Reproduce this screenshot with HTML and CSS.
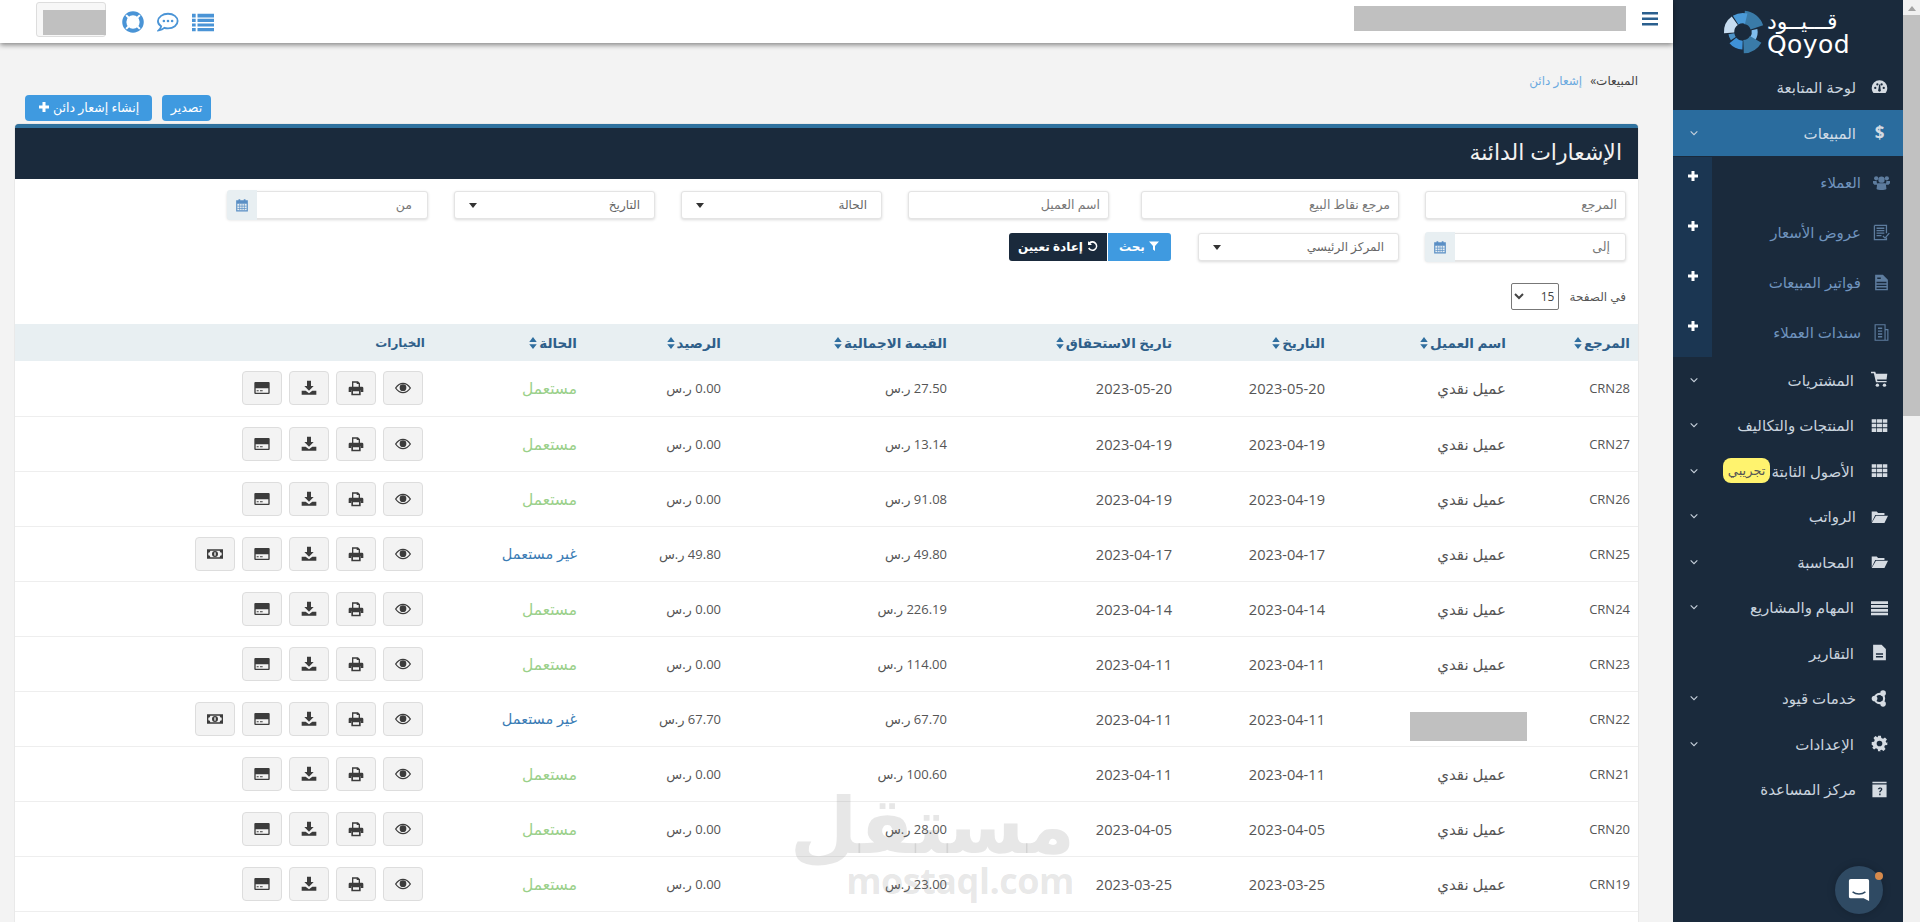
FILE: index.html
```html
<!DOCTYPE html>
<html lang="ar">
<head>
<meta charset="utf-8">
<title>الإشعارات الدائنة</title>
<link rel="stylesheet" href="styles.css">
</head>
<body>
<svg class="sprite" xmlns="http://www.w3.org/2000/svg">
  <symbol id="i-eye" viewBox="0 0 24 24"><path d="M1 12c3-4.500 6.800-7 11-7s8 2.500 11 7c-3 4.500-6.800 7-11 7S4 16.500 1 12z" fill="none" stroke="currentColor" stroke-width="2"/><circle cx="12" cy="11.500" r="5" fill="currentColor"/></symbol>
  <symbol id="i-print" viewBox="0 0 24 24"><path d="M6 10V2h9l3 3v5h-2V6h-3V4H8v6zM3 10h18a2 2 0 0 1 2 2v6h-4v-3H5v3H1v-6a2 2 0 0 1 2-2z" fill="currentColor"/><path d="M5 15h14v8H5zM7.500 17v3.500h9V17z" fill="currentColor" fill-rule="evenodd"/></symbol>
  <symbol id="i-down" viewBox="0 0 24 24"><path d="M9 1h6v8h4l-7 7-7-7h4zM1 16h6l5 4 5-4h6v6H1z" fill="currentColor"/></symbol>
  <symbol id="i-card" viewBox="0 0 24 24"><path d="M2 3h20a1.500 1.500 0 0 1 1.500 1.500v15A1.500 1.500 0 0 1 22 21H2a1.500 1.500 0 0 1-1.500-1.500v-15A1.500 1.500 0 0 1 2 3zm.5 9.500v6.500h19v-6.500zM4 15.500h3v1.500H4zm5 0h4v1.500H9z" fill="currentColor" fill-rule="evenodd"/></symbol>
  <symbol id="i-money" viewBox="0 0 24 24"><path d="M0 5h24v14H0zm5 2a3 3 0 0 1-3 3v4a3 3 0 0 1 3 3h14a3 3 0 0 1 3-3v-4a3 3 0 0 1-3-3zm7 0.500a4.500 4.500 0 1 1 0 9 4.500 4.500 0 0 1 0-9z" fill="currentColor" fill-rule="evenodd"/><rect x="11" y="9.500" width="2" height="5" fill="#f3f3f3"/></symbol>
  <symbol id="i-cal" viewBox="0 0 24 24"><path d="M2 4h4V2h3v2h6V2h3v2h4v19H2zm2 6v11h16V10z" fill="currentColor" fill-rule="evenodd"/><path d="M8 10v11M12 10v11M16 10v11M4 14h16M4 18h16" fill="none" stroke="currentColor" stroke-width="1.200"/></symbol>
  <symbol id="i-plus" viewBox="0 0 24 24"><path d="M9 2h6v7h7v6h-7v7H9v-7H2V9h7z" fill="currentColor"/></symbol>
  <symbol id="i-chev" viewBox="0 0 24 24"><path d="M4 8l8 8 8-8" fill="none" stroke="currentColor" stroke-width="2.500"/></symbol>
  <symbol id="i-sort" viewBox="0 0 10 16"><path d="M5 0l5 6.500H0zM5 16l5-6.500H0z" fill="currentColor"/></symbol>
  <symbol id="i-filter" viewBox="0 0 24 24"><path d="M2 3h20l-8 9v10l-4-3v-7z" fill="currentColor"/></symbol>
  <symbol id="i-undo" viewBox="0 0 24 24"><path d="M4 2v8h8L9 7a6.500 6.500 0 1 1-2 8l-3 2a10 10 0 1 0 2-12.500z" fill="currentColor"/></symbol>
  <symbol id="i-gauge" viewBox="0 0 24 24"><path d="M12 3a11 11 0 0 0-11 11c0 3 1 5 2.500 7h17c1.500-2 2.500-4 2.500-7A11 11 0 0 0 12 3zm-6 9.500a1.600 1.600 0 1 1 0 3.200 1.600 1.600 0 0 1 0-3.200zm3-5a1.600 1.600 0 1 1 0 3.200 1.600 1.600 0 0 1 0-3.200zm6 0a1.600 1.600 0 1 1 0 3.200 1.600 1.600 0 0 1 0-3.200zm3 5a1.600 1.600 0 1 1 0 3.200 1.600 1.600 0 0 1 0-3.200zM11.500 9h1.500l.5 7a2 2 0 1 1-3 0z" fill="currentColor" fill-rule="evenodd"/></symbol>
  <symbol id="i-users" viewBox="0 0 24 24"><circle cx="12" cy="8" r="4.500" fill="currentColor"/><circle cx="4.500" cy="6" r="3" fill="currentColor"/><circle cx="19.500" cy="6" r="3" fill="currentColor"/><path d="M0 10h5l1 5H2L0 13zM24 10h-5l-1 5h4l2-2zM6 13h12l1 8c-2 2-12 2-14 0z" fill="currentColor"/></symbol>
  <symbol id="i-quote" viewBox="0 0 24 24"><path d="M2 2h17v11M19 19v3H2V2" fill="none" stroke="currentColor" stroke-width="1.800"/><path d="M5 6h11M5 9.500h11M5 13h11M5 16.500h7" stroke="currentColor" stroke-width="1.800"/><path d="M14 17l3 3 6-7" fill="none" stroke="currentColor" stroke-width="1.800"/></symbol>
  <symbol id="i-inv" viewBox="0 0 24 24"><path d="M3 1h11l7 7v15H3zm2 10v2h14v-2zm0 4v2h14v-2zm0 4v2h14v-2zM6 5v2h5V5z" fill="currentColor" fill-rule="evenodd"/></symbol>
  <symbol id="i-rcpt" viewBox="0 0 24 24"><path d="M3 1h14v22H3zM17 8h4v15h-4" fill="none" stroke="currentColor" stroke-width="1.600"/><path d="M7 5h6v2H7zM7 9h6v2H7zM7 13h6v2H7zM7 17h6v2H7z" fill="currentColor"/></symbol>
  <symbol id="i-cart" viewBox="0 0 24 24"><path d="M23 4H7L6 1H0v2h4l3 13h15v-2H9l-.5-2H22z" fill="currentColor"/><circle cx="9" cy="20" r="2.400" fill="currentColor"/><circle cx="19" cy="20" r="2.400" fill="currentColor"/></symbol>
  <symbol id="i-grid" viewBox="0 0 24 24"><path d="M1 3h6.500v5H1zm7.500 0h7v5h-7zm8 0H23v5h-6.500zM1 9.500h6.500v5H1zm7.500 0h7v5h-7zm8 0H23v5h-6.500zM1 16h6.500v5H1zm7.500 0h7v5h-7zm8 0H23v5h-6.500z" fill="currentColor"/></symbol>
  <symbol id="i-folder" viewBox="0 0 24 24"><path d="M1 20V5h7l2 2h9v3H6zM7 11h17l-5 10H1z" fill="currentColor"/></symbol>
  <symbol id="i-list" viewBox="0 0 24 24"><path d="M0 3h24v4H0zm0 5.500h24v4H0zM0 14h24v4H0zm0 5.500h24V23H0z" fill="currentColor"/></symbol>
  <symbol id="i-bars" viewBox="0 0 16 14"><path d="M0 0h16v2.600H0zM0 5.500h16v2.600H0zM0 11h16v2.600H0z" fill="currentColor"/></symbol>
  <symbol id="i-file" viewBox="0 0 24 24"><path d="M3 1h12l6 6v16H3zm4 12v2h10v-2zm0 4v2h10v-2z" fill="currentColor" fill-rule="evenodd"/></symbol>
  <symbol id="i-svc" viewBox="0 0 24 24"><circle cx="12" cy="12" r="6.500" fill="none" stroke="currentColor" stroke-width="3"/><circle cx="5" cy="12" r="4" fill="currentColor"/><circle cx="17" cy="4.500" r="4" fill="currentColor"/><circle cx="17" cy="19.500" r="4" fill="currentColor"/></symbol>
  <symbol id="i-cog" viewBox="0 0 24 24"><path d="M10 1h4l.6 3.200 2.400 1 2.700-1.800 2.800 2.800-1.800 2.700 1 2.400L23 10v4l-3.300.6-1 2.400 1.800 2.700-2.800 2.800-2.700-1.800-2.400 1L14 23h-4l-.6-3.300-2.400-1-2.700 1.800-2.800-2.800L3.300 17l-1-2.400L1 14v-4l3.300-.6 1-2.400-1.800-2.700 2.800-2.800L9 3.300l.4-.1zm2 7a4 4 0 1 0 0 8 4 4 0 0 0 0-8z" fill="currentColor" fill-rule="evenodd"/></symbol>
  <symbol id="i-help" viewBox="0 0 24 24"><path d="M2 1h20v2H2zM2 5h20v18H2zm8 6.500h2c.5-1.500 2-1 2 0 0 1.500-2.500 1.500-2.500 4.500h2c0-2 2.500-2.500 2.500-4.500 0-3-5.500-3.500-6.500 0zM11.500 17.500v2.500h2v-2.500z" fill="currentColor" fill-rule="evenodd"/></symbol>
  <symbol id="i-buoy" viewBox="0 0 24 24"><circle cx="12" cy="12" r="9.500" fill="none" stroke="currentColor" stroke-width="4.500"/><path d="M4.500 4.500l4.500 4.500M19.500 4.500L15 9M4.500 19.500L9 15M19.500 19.500L15 15" stroke="#fff" stroke-width="2.200"/></symbol>
  <symbol id="i-chat" viewBox="0 0 24 24"><path d="M12 3c6 0 10.500 3.500 10.500 8s-4.500 8-10.500 8c-1.500 0-3-.2-4-.6-1.500 1.400-3.500 2.300-6 2.600 1.300-1.300 2.200-2.700 2.500-4.300-2.300-1.400-3.500-3.400-3.500-5.700C1.500 6.500 6 3 12 3z" fill="none" stroke="currentColor" stroke-width="2"/><circle cx="7.500" cy="11" r="1.400" fill="currentColor"/><circle cx="12" cy="11" r="1.400" fill="currentColor"/><circle cx="16.500" cy="11" r="1.400" fill="currentColor"/></symbol>
  <symbol id="i-rows" viewBox="0 0 24 24"><path d="M0 3h4v4H0zm6 0h18v4H6zM0 8.500h4v3.500H0zm6 0h18v3.500H6zM0 13.500h4V17H0zm6 0h18V17H6zM0 18.500h4V22H0zm6 0h18V22H6z" fill="currentColor"/></symbol>
</svg>

<div class="app">
  <div class="main">
    <header class="topbar">
      <div class="top-end">
        <svg class="burger"><use href="#i-bars"/></svg>
        <div class="redact-top"></div>
      </div>
      <div class="top-tools">
        <svg class="tool"><use href="#i-rows"/></svg>
        <svg class="tool"><use href="#i-chat"/></svg>
        <svg class="tool"><use href="#i-buoy"/></svg>
        <div class="lang"><div class="redact-lang"></div></div>
      </div>
    </header>

    <div class="content">
      <nav class="crumbs"><span class="crumb-a">المبيعات»</span><span class="crumb-b">إشعار دائن</span></nav>
      <div class="actions">
        <a class="btn-blue btn-export">تصدير</a>
        <a class="btn-blue btn-new">إنشاء إشعار دائن <svg class="ico-12"><use href="#i-plus"/></svg></a>
      </div>

      <section class="panel">
        <div class="panel-head"><h1>الإشعارات الدائنة</h1></div>

        <form class="filters">
          <div class="frow">
            <div class="field">المرجع</div>
            <div class="field wide">مرجع نقاط البيع</div>
            <div class="field">اسم العميل</div>
            <div class="field sel">الحالة<i class="caret"></i></div>
            <div class="field sel">التاريخ<i class="caret"></i></div>
            <div class="field dated">من<span class="addon"><svg class="ico-cal"><use href="#i-cal"/></svg></span></div>
          </div>
          <div class="frow frow2">
            <div class="field dated">إلى<span class="addon"><svg class="ico-cal"><use href="#i-cal"/></svg></span></div>
            <div class="field sel">المركز الرئيسي<i class="caret"></i></div>
            <div class="btns">
              <a class="btn-search"><svg class="ico-12"><use href="#i-filter"/></svg> بحث</a>
              <a class="btn-reset"><svg class="ico-12"><use href="#i-undo"/></svg> إعادة تعيين</a>
            </div>
          </div>
        </form>

        <div class="perpage">
          <label for="pp">في الصفحة</label>
          <select id="pp"><option>15</option></select>
        </div>

        <table class="grid">
          <colgroup><col class="c1"><col class="c2"><col class="c3"><col class="c4"><col class="c5"><col class="c6"><col class="c7"><col></colgroup>
          <thead>
            <tr>
              <th>المرجع<svg class="sort"><use href="#i-sort"/></svg></th>
              <th>اسم العميل<svg class="sort"><use href="#i-sort"/></svg></th>
              <th>التاريخ<svg class="sort"><use href="#i-sort"/></svg></th>
              <th>تاريخ الاستحقاق<svg class="sort"><use href="#i-sort"/></svg></th>
              <th>القيمة الاجمالية<svg class="sort"><use href="#i-sort"/></svg></th>
              <th>الرصيد<svg class="sort"><use href="#i-sort"/></svg></th>
              <th>الحالة<svg class="sort"><use href="#i-sort"/></svg></th>
              <th class="th-opts">الخيارات</th>
            </tr>
          </thead>
          <tbody>
            <tr><td>CRN28</td><td>عميل نقدي</td><td>2023-05-20</td><td>2023-05-20</td><td>27.50 ر.س</td><td>0.00 ر.س</td><td class="used">مستعمل</td><td><div class="ops"><a class="op"><svg><use href="#i-eye"/></svg></a><a class="op"><svg><use href="#i-print"/></svg></a><a class="op"><svg><use href="#i-down"/></svg></a><a class="op"><svg><use href="#i-card"/></svg></a></div></td></tr>
            <tr><td>CRN27</td><td>عميل نقدي</td><td>2023-04-19</td><td>2023-04-19</td><td>13.14 ر.س</td><td>0.00 ر.س</td><td class="used">مستعمل</td><td><div class="ops"><a class="op"><svg><use href="#i-eye"/></svg></a><a class="op"><svg><use href="#i-print"/></svg></a><a class="op"><svg><use href="#i-down"/></svg></a><a class="op"><svg><use href="#i-card"/></svg></a></div></td></tr>
            <tr><td>CRN26</td><td>عميل نقدي</td><td>2023-04-19</td><td>2023-04-19</td><td>91.08 ر.س</td><td>0.00 ر.س</td><td class="used">مستعمل</td><td><div class="ops"><a class="op"><svg><use href="#i-eye"/></svg></a><a class="op"><svg><use href="#i-print"/></svg></a><a class="op"><svg><use href="#i-down"/></svg></a><a class="op"><svg><use href="#i-card"/></svg></a></div></td></tr>
            <tr><td>CRN25</td><td>عميل نقدي</td><td>2023-04-17</td><td>2023-04-17</td><td>49.80 ر.س</td><td>49.80 ر.س</td><td class="unused">غير مستعمل</td><td><div class="ops"><a class="op"><svg><use href="#i-eye"/></svg></a><a class="op"><svg><use href="#i-print"/></svg></a><a class="op"><svg><use href="#i-down"/></svg></a><a class="op"><svg><use href="#i-card"/></svg></a><a class="op"><svg><use href="#i-money"/></svg></a></div></td></tr>
            <tr><td>CRN24</td><td>عميل نقدي</td><td>2023-04-14</td><td>2023-04-14</td><td>226.19 ر.س</td><td>0.00 ر.س</td><td class="used">مستعمل</td><td><div class="ops"><a class="op"><svg><use href="#i-eye"/></svg></a><a class="op"><svg><use href="#i-print"/></svg></a><a class="op"><svg><use href="#i-down"/></svg></a><a class="op"><svg><use href="#i-card"/></svg></a></div></td></tr>
            <tr><td>CRN23</td><td>عميل نقدي</td><td>2023-04-11</td><td>2023-04-11</td><td>114.00 ر.س</td><td>0.00 ر.س</td><td class="used">مستعمل</td><td><div class="ops"><a class="op"><svg><use href="#i-eye"/></svg></a><a class="op"><svg><use href="#i-print"/></svg></a><a class="op"><svg><use href="#i-down"/></svg></a><a class="op"><svg><use href="#i-card"/></svg></a></div></td></tr>
            <tr><td>CRN22</td><td class="masked"><span class="redact-name"></span></td><td>2023-04-11</td><td>2023-04-11</td><td>67.70 ر.س</td><td>67.70 ر.س</td><td class="unused">غير مستعمل</td><td><div class="ops"><a class="op"><svg><use href="#i-eye"/></svg></a><a class="op"><svg><use href="#i-print"/></svg></a><a class="op"><svg><use href="#i-down"/></svg></a><a class="op"><svg><use href="#i-card"/></svg></a><a class="op"><svg><use href="#i-money"/></svg></a></div></td></tr>
            <tr><td>CRN21</td><td>عميل نقدي</td><td>2023-04-11</td><td>2023-04-11</td><td>100.60 ر.س</td><td>0.00 ر.س</td><td class="used">مستعمل</td><td><div class="ops"><a class="op"><svg><use href="#i-eye"/></svg></a><a class="op"><svg><use href="#i-print"/></svg></a><a class="op"><svg><use href="#i-down"/></svg></a><a class="op"><svg><use href="#i-card"/></svg></a></div></td></tr>
            <tr><td>CRN20</td><td>عميل نقدي</td><td>2023-04-05</td><td>2023-04-05</td><td>28.00 ر.س</td><td>0.00 ر.س</td><td class="used">مستعمل</td><td><div class="ops"><a class="op"><svg><use href="#i-eye"/></svg></a><a class="op"><svg><use href="#i-print"/></svg></a><a class="op"><svg><use href="#i-down"/></svg></a><a class="op"><svg><use href="#i-card"/></svg></a></div></td></tr>
            <tr><td>CRN19</td><td>عميل نقدي</td><td>2023-03-25</td><td>2023-03-25</td><td>23.00 ر.س</td><td>0.00 ر.س</td><td class="used">مستعمل</td><td><div class="ops"><a class="op"><svg><use href="#i-eye"/></svg></a><a class="op"><svg><use href="#i-print"/></svg></a><a class="op"><svg><use href="#i-down"/></svg></a><a class="op"><svg><use href="#i-card"/></svg></a></div></td></tr>
          </tbody>
        </table>
      </section>
    </div>

    <div class="watermark" aria-hidden="true"><div class="wm-ar">مستقل</div><div class="wm-en">mostaql.com</div></div>
  </div>

  <aside class="sidebar">
    <div class="logo">
      <div class="logo-words"><span class="logo-ar">قـــيــود</span><span class="logo-en">Qoyod</span></div>
      <svg class="logo-mark" viewBox="0 0 60 60">
        <g fill="none">
          <circle cx="30" cy="30" r="20" stroke="#3a7ba8" stroke-width="18" stroke-dasharray="23 103" transform="rotate(-85 30 30)"/>
          <circle cx="30" cy="30" r="16" stroke="#7fbcec" stroke-width="8" stroke-dasharray="13 88" transform="rotate(-12 30 30)"/>
          <circle cx="30" cy="30" r="20" stroke="#3a7ba8" stroke-width="18" stroke-dasharray="20 106" transform="rotate(30 30 30)"/>
          <circle cx="30" cy="30" r="18" stroke="#3f92d8" stroke-width="12" stroke-dasharray="15 98" transform="rotate(92 30 30)"/>
          <circle cx="30" cy="30" r="16" stroke="#4d93c8" stroke-width="8" stroke-dasharray="7 94" transform="rotate(146 30 30)"/>
          <circle cx="30" cy="30" r="19" stroke="#c6dcf0" stroke-width="14" stroke-dasharray="19 100" transform="rotate(176 30 30)"/>
          <circle cx="30" cy="30" r="19" stroke="#4a9ad8" stroke-width="14" stroke-dasharray="15 104" transform="rotate(238 30 30)"/>
        </g>
      </svg>
    </div>
    <ul class="menu">
      <li class="mi far"><svg class="mi-ico"><use href="#i-gauge"/></svg><span class="mi-t">لوحة المتابعة</span></li>
      <li class="mi far active"><span class="mi-dollar">$</span><span class="mi-t">المبيعات</span><svg class="chev"><use href="#i-chev"/></svg></li>
      <li class="si"><svg class="si-ico"><use href="#i-users"/></svg><span class="si-t">العملاء</span><span class="si-add"><svg class="ico-12"><use href="#i-plus"/></svg></span></li>
      <li class="si"><svg class="si-ico"><use href="#i-quote"/></svg><span class="si-t">عروض الأسعار</span><span class="si-add"><svg class="ico-12"><use href="#i-plus"/></svg></span></li>
      <li class="si"><svg class="si-ico"><use href="#i-inv"/></svg><span class="si-t">فواتير المبيعات</span><span class="si-add"><svg class="ico-12"><use href="#i-plus"/></svg></span></li>
      <li class="si"><svg class="si-ico"><use href="#i-rcpt"/></svg><span class="si-t">سندات العملاء</span><span class="si-add"><svg class="ico-12"><use href="#i-plus"/></svg></span></li>
      <li class="mi"><svg class="mi-ico"><use href="#i-cart"/></svg><span class="mi-t">المشتريات</span><svg class="chev"><use href="#i-chev"/></svg></li>
      <li class="mi"><svg class="mi-ico"><use href="#i-grid"/></svg><span class="mi-t">المنتجات والتكاليف</span><svg class="chev"><use href="#i-chev"/></svg></li>
      <li class="mi"><svg class="mi-ico"><use href="#i-grid"/></svg><span class="mi-t">الأصول الثابتة</span><span class="badge">تجريبي</span><svg class="chev"><use href="#i-chev"/></svg></li>
      <li class="mi far"><svg class="mi-ico"><use href="#i-folder"/></svg><span class="mi-t">الرواتب</span><svg class="chev"><use href="#i-chev"/></svg></li>
      <li class="mi"><svg class="mi-ico"><use href="#i-folder"/></svg><span class="mi-t">المحاسبة</span><svg class="chev"><use href="#i-chev"/></svg></li>
      <li class="mi"><svg class="mi-ico"><use href="#i-list"/></svg><span class="mi-t">المهام والمشاريع</span><svg class="chev"><use href="#i-chev"/></svg></li>
      <li class="mi"><svg class="mi-ico"><use href="#i-file"/></svg><span class="mi-t">التقارير</span></li>
      <li class="mi far"><svg class="mi-ico"><use href="#i-svc"/></svg><span class="mi-t">خدمات قيود</span><svg class="chev"><use href="#i-chev"/></svg></li>
      <li class="mi"><svg class="mi-ico"><use href="#i-cog"/></svg><span class="mi-t">الإعدادات</span><svg class="chev"><use href="#i-chev"/></svg></li>
      <li class="mi far"><svg class="mi-ico"><use href="#i-help"/></svg><span class="mi-t">مركز المساعدة</span></li>
    </ul>
    <a class="chat-fab">
      <svg viewBox="0 0 24 28" class="chat-ico"><path d="M3 2h18a2 2 0 0 1 2 2v22l-6-3H3a2 2 0 0 1-2-2V4a2 2 0 0 1 2-2z" fill="#fff"/><path d="M5 16c4 3 10 3 14 0" fill="none" stroke="#2f4a63" stroke-width="1.600"/></svg>
      <i class="chat-dot"></i>
    </a>
  </aside>

  <div class="vscroll"><div class="vs-up"></div><div class="vs-thumb"></div></div>
</div>
</body>
</html>
```

FILE: styles.css
```css
* { box-sizing: border-box; }
html, body { margin: 0; height: 100%; overflow: hidden; }
body { font-family: "Open Sans", "Noto Sans", "DejaVu Sans", sans-serif; font-size: 14px; color: #555; background: #f3f3f3; direction: rtl; }
.sprite { position: absolute; width: 0; height: 0; }
ul { list-style: none; margin: 0; padding: 0; }

.app { display: flex; flex-direction: row; height: 922px; overflow: hidden; }
.vscroll { order: 1; width: 17px; flex: none; background: #f1f1f1; padding-top: 3px; }
.vs-up { width: 0; height: 0; margin: 3px auto 4px; border: 4px solid transparent; border-top: 0; border-bottom: 5px solid #a3a3a3; }
.vs-thumb { height: 401px; background: #c1c1c1; margin-top: 2px; }

/* sidebar */
.sidebar { order: 2; width: 230px; flex: none; background: #1a2a3c; position: relative; color: #c9d3de; }
.logo { height: 64px; display: flex; justify-content: center; align-items: flex-start; gap: 0; padding: 10px 6px 0 0; }
.logo-mark { width: 44px; height: 44px; margin-right: 2px; }
.logo-words { display: flex; flex-direction: column; align-items: flex-end; color: #fff; line-height: 1; width: 82px; }
.logo-ar { font-size: 22px; line-height: 24px; font-family: "DejaVu Sans", sans-serif; }
.logo-en { font-family: "DejaVu Sans", sans-serif; font-size: 25px; line-height: 22px; direction: ltr; letter-spacing: .4px; }
.mi { height: 45.5px; display: flex; align-items: center; padding: 0 15px 0 16px; font-size: 15px; }
.mi-ico { width: 17px; height: 17px; flex: none; color: #d5dbe2; margin-left: 17px; }
.far .mi-ico, .far .mi-dollar { margin-left: 15px; }
.mi-dollar { width: 17px; flex: none; margin-left: 17px; font-weight: 700; font-size: 17px; text-align: center; color: #d5dbe2; }
.mi-t { white-space: nowrap; }
.active { background: #2a6c9e; color: #cfdbe6; height: 46px; margin-bottom: 1.5px; }
.chev { width: 10px; height: 10px; margin-right: auto; color: #c9d3de; }
.badge { background: #fff36e; color: #555; border-radius: 8px; height: 25px; line-height: 25px; padding: 0 5px; font-size: 13px; margin-right: 1px; }
.si { height: 50px; display: flex; align-items: center; padding-right: 13px; color: #6f93bd; font-size: 15px; }
.si-ico { width: 17px; height: 17px; flex: none; color: #5d7c9e; margin-left: 12px; }
.si-add { margin-right: auto; align-self: stretch; width: 39px; background: #1b3652; color: #fff; display: flex; justify-content: center; padding-top: 13px; }
.ico-12 { width: 12px; height: 12px; fill: currentColor; vertical-align: -1px; }
.chat-fab { position: absolute; right: 20px; bottom: 8px; width: 48px; height: 48px; border-radius: 50%; background: #2f4a63; display: flex; align-items: center; justify-content: center; box-shadow: 0 0 8px rgba(0,0,0,.2); }
.chat-ico { width: 22px; height: 26px; }
.chat-dot { position: absolute; top: 6px; right: 0; width: 8px; height: 8px; border-radius: 50%; background: #d68a4c; }

/* main */
.main { order: 3; flex: 1; min-width: 0; position: relative; }
.topbar { height: 43px; background: #fff; box-shadow: 0 2px 5px rgba(0,0,0,.45); display: flex; justify-content: space-between; align-items: center; position: relative; z-index: 2; }
.top-end { display: flex; align-items: center; padding-right: 15px; }
.burger { width: 16px; height: 14px; color: #2a5f8e; margin-top: -6px; }
.redact-top { width: 272px; height: 25px; background: #c0c0c0; margin-right: 16px; margin-top: -6px; }
.top-tools { display: flex; align-items: center; gap: 13px; padding-left: 36px; direction: rtl; }
.tool { width: 22px; height: 22px; color: #4a94d6; }
.lang { width: 70px; height: 35px; border: 1px solid #ddd; border-radius: 3px; background: #f7f7f7; position: relative; margin-right: 3px; margin-top: -5px; }
.redact-lang { position: absolute; left: 6px; top: 7px; width: 63px; height: 25px; background: #c0c0c0; }
.content { padding: 0 35px 0 15px; }
.crumbs { padding: 29px 0 0 0; height: 52px; font-size: 12px; line-height: 18px; display: flex; gap: 8px; }
.crumb-a { color: #444; }
.crumb-b { color: #6caadf; }
.actions { display: flex; gap: 10px; height: 29px; padding-left: 10px; justify-content: flex-end; flex-direction: row; }
.btn-blue { background: #3f9ae0; color: #fff; height: 26px; border-radius: 4px; font-size: 12.5px; line-height: 26px; text-align: center; }
.btn-export { width: 49px; }
.btn-new { width: 127px; }

.panel { background: #fff; border-top: 4px solid #2f729f; border-radius: 4px 4px 0 0; box-shadow: 0 0 1px rgba(0,0,0,.4); height: 800px; }
.panel-head { height: 51px; background: #1a2a3c; display: flex; align-items: center; padding: 0 16px 6px 0; }
h1 { margin: 0; font-size: 22px; font-weight: 400; color: #f2f2f2; }

.filters { height: 104px; padding: 12px 12px 0 0; }
.frow { display: flex; gap: 26px; height: 28px; }
.frow2 { margin-top: 14px; }
.field { width: 201px; height: 28px; background: #fff; border: 1px solid #e4e4e4; border-radius: 3px; box-shadow: 0 1px 3px rgba(0,0,0,.15); font-size: 12.5px; line-height: 26px; padding: 0 8px; color: #777; display: flex; align-items: center; position: relative; }
.wide { width: 258px; margin-left: 6px; }
.sel { justify-content: space-between; color: #666; padding: 0 14px; font-size: 12px; }
.caret { width: 0; height: 0; border: 4px solid transparent; border-bottom: 0; border-top: 5px solid #333; }
.dated { padding: 0 15px 0 0; justify-content: space-between; }
.addon { width: 30px; height: 30px; margin: -1px 0 -1px -1px; background: #e8eff2; border-radius: 3px 0 0 3px; display: flex; align-items: center; justify-content: center; }
.ico-cal { width: 14px; height: 14px; color: #5a8fc5; }
.btns { display: flex; gap: 1px; margin-right: 1px; }
.btn-search, .btn-reset { height: 28px; font-size: 12px; line-height: 28px; color: #fff; text-align: center; font-weight: 600; }
.btn-search { width: 63px; background: #3f9ae0; border-radius: 0 3px 3px 0; }
.btn-reset { width: 98px; background: #1a2a3c; border-radius: 3px 0 0 3px; }

.perpage { height: 41px; padding-right: 12px; display: flex; align-items: flex-start; gap: 10px; font-size: 12px; }
.perpage label { line-height: 28px; color: #555; }
.perpage select { width: 48px; height: 27px; border: 1px solid #777; border-radius: 2px; background: #fff; font: 12px "Open Sans", sans-serif; color: #444; }

.grid { width: 100%; border-collapse: collapse; table-layout: fixed; }
.c1 { width: 124px; } .c2 { width: 181px; } .c3 { width: 153px; } .c4 { width: 225px; } .c5 { width: 226px; } .c6 { width: 144px; } .c7 { width: 152px; }
.grid th { height: 37px; background: #e8eff2; color: #2f5f8a; font-size: 13.5px; font-weight: 700; text-align: right; padding: 0 8px; }
.grid th.th-opts { font-size: 12px; }
.grid td { height: 55px; border-bottom: 1px solid #eee; font-size: 13px; color: #555; padding: 0 8px; text-align: right; white-space: nowrap; }
.grid td:nth-child(2) { font-size: 15px; }
.grid td:nth-child(3), .grid td:nth-child(4) { font-size: 14.6px; }
.sort { width: 8px; height: 12px; vertical-align: -1px; color: #2f6e9f; margin-right: 2px; }
.grid td.used { color: #9ad08a; font-size: 15.5px; }
.grid td.unused { color: #3a7cb5; font-size: 14.5px; }
.ops { display: flex; gap: 7px; margin-right: 2px; }
.op { width: 40px; height: 34px; background: #f3f3f3; border: 1px solid #ddd; border-radius: 4px; display: flex; align-items: center; justify-content: center; color: #3c3c3c; }
.op svg { width: 16px; height: 16px; }
.masked { position: relative; }
.redact-name { position: absolute; right: -13px; top: 20px; width: 117px; height: 29px; background: #c0c0c0; }

.watermark { position: absolute; left: 845px; top: 780px; width: 230px; text-align: center; color: rgba(120,120,120,.18); font-weight: 700; pointer-events: none; z-index: 3; }
.wm-ar { font-size: 78px; line-height: 86px; direction: rtl; }
.wm-en { font-size: 36px; line-height: 30px; direction: ltr; font-family: "Open Sans", sans-serif; letter-spacing: -.5px; }
```
